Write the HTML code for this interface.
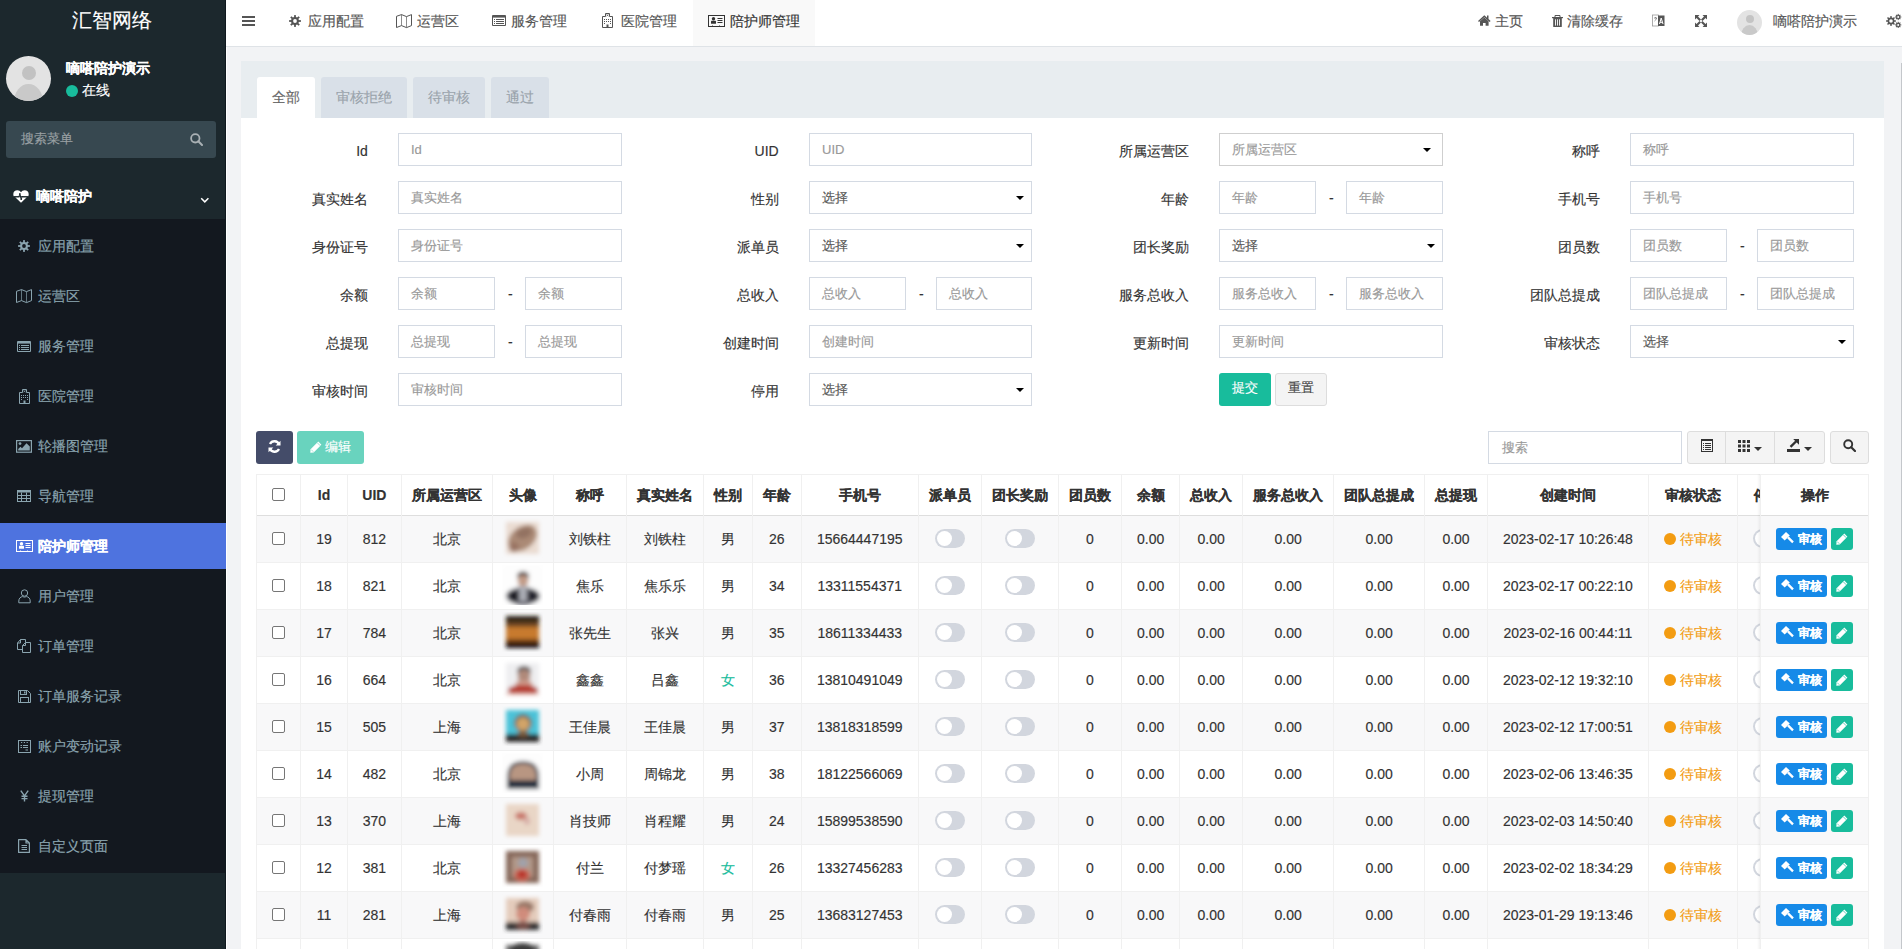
<!DOCTYPE html><html><head><meta charset="utf-8"><title>陪护师管理</title><style>
*{box-sizing:border-box;margin:0;padding:0}
html,body{width:1902px;height:949px;overflow:hidden}
body{position:relative;font-family:"Liberation Sans",sans-serif;font-size:14px;color:#333;background:#f2f3f5;-webkit-text-stroke:0.15px currentColor}
.abs{position:absolute}
#sb{left:0;top:0;width:226px;height:949px;background:#1c282d}
#sbmenu{left:0;top:219px;width:226px;height:654px;background:#13181f}
#sbedge{left:225px;top:0;width:1px;height:949px;background:#10151b}
.mi{position:absolute;left:0;width:225px;height:46px;color:#8aa4af;font-size:14px;line-height:46px}
.mi .ic{position:absolute;left:14px;top:0;width:20px;height:46px;display:flex;align-items:center;justify-content:center}
.mi .tx{position:absolute;left:38px;top:0}
.mi.act{background:#4e73df;color:#fff;width:226px}.mi.act .tx{font-weight:bold}
#hd{left:226px;top:0;width:1676px;height:46px;background:#fff;border-bottom:0}
#hdline{left:226px;top:46px;width:1676px;height:1px;background:#dfe3e7}
.nv{position:absolute;top:0;height:46px;line-height:42px;color:#555;font-size:14px;white-space:nowrap}
.nv svg{position:absolute}
#panel{left:241px;top:61px;width:1643px;height:900px;background:#fff}
#ph{left:0;top:0;width:1643px;height:57px;background:#e8edf0}
.tab{position:absolute;top:16px;height:41px;background:#d9e0e8;color:#9aa3ab;font-size:14px;line-height:40px;text-align:center;border-radius:3px 3px 0 0}
.tab.act{background:#fff;color:#666}
.lbl{position:absolute;font-size:14px;color:#333;text-align:right;white-space:nowrap;line-height:20px}
.inp{position:absolute;height:33px;border:1px solid #d4dae3;background:#fff;font-size:13px;color:#999;line-height:31px;padding-left:12px;white-space:nowrap;overflow:hidden}
.inp.sel{color:#555}
.caret{position:absolute;right:8px;top:14px;width:0;height:0;border-left:4px solid transparent;border-right:4px solid transparent;border-top:4px solid #000}
.dash{position:absolute;font-size:14px;color:#333;line-height:20px}
.btn{position:absolute;height:32px;border-radius:3px;font-size:13px;line-height:32px;text-align:center;white-space:nowrap}
.tb{position:absolute;left:256px;top:474px;width:1613px;height:480px;overflow:hidden}
.th{position:absolute;top:0;height:41px;font-weight:bold;color:#333;text-align:center;line-height:43px;white-space:nowrap;overflow:hidden}
.td{position:absolute;height:47px;text-align:center;line-height:46px;color:#333;white-space:nowrap;overflow:hidden}
.row{position:absolute;left:0;width:1613px;height:47px}
.cb{display:inline-block;width:13px;height:13px;border:1px solid #767676;border-radius:2px;background:#fff;vertical-align:middle}
.tog{position:absolute;width:30px;height:19px;margin-top:-1px;border-radius:10px;background:#d2d6de}
.tog::after{content:"";position:absolute;left:2px;top:2px;width:15px;height:15px;border-radius:50%;background:#fff}
.av{position:absolute;width:32px;height:32px;filter:blur(1.6px)}
</style></head><body>
<div id="sb" class="abs"></div><div id="sbmenu" class="abs"></div><div class="abs" style="left:225px;top:0;width:1px;height:949px;background:#0f181e"></div>
<div class="abs" style="left:0;top:0;width:223px;text-align:center;color:#fff;font-size:20px;line-height:40px">汇智网络</div>
<div class="abs" style="left:6px;top:56px;width:45px;height:45px;border-radius:50%;background:#e3e3e3;overflow:hidden"><div class="abs" style="left:16px;top:10px;width:14px;height:14px;border-radius:50%;background:#c2c2c2"></div><div class="abs" style="left:8px;top:28px;width:29px;height:18px;border-radius:50% 50% 0 0/100% 100% 0 0;background:#c9c9c9"></div></div>
<div class="abs" style="left:66px;top:58px;color:#fff;font-size:14px;font-weight:bold;line-height:20px">嘀嗒陪护演示</div>
<div class="abs" style="left:66px;top:85px;width:12px;height:12px;border-radius:50%;background:#18bc9c"></div>
<div class="abs" style="left:82px;top:80px;color:#fff;font-size:14px;line-height:20px">在线</div>
<div class="abs" style="left:6px;top:121px;width:210px;height:37px;border-radius:3px;background:#374850"></div>
<div class="abs" style="left:21px;top:129px;color:#9aa0a4;font-size:13px;line-height:20px">搜索菜单</div>
<svg class="abs" style="left:190px;top:133px" width="13" height="13" viewBox="0 0 13 13"><circle cx="5.3" cy="5.3" r="4.2" fill="none" stroke="#a9b0b4" stroke-width="1.8"/><line x1="8.3" y1="8.3" x2="12" y2="12" stroke="#a9b0b4" stroke-width="2" stroke-linecap="round"/></svg>
<svg class="abs" style="left:13px;top:190px" width="16" height="13" viewBox="0 0 16 13"><path d="M0.3 4.2 C0.3 1.6 2 0.2 4.4 0.2 C6 0.2 7.2 1 8 2.2 C8.8 1 10 0.2 11.6 0.2 C14 0.2 15.7 1.6 15.7 4.2 C15.7 5.2 15.5 5.8 15.2 6.2 H0.8 C0.5 5.8 0.3 5.2 0.3 4.2 Z" fill="#fff"/><path d="M2.2 7.3 H13.8 L8 12.8 Z" fill="#fff"/><path d="M1 6.8 H6 L6.9 3.2 L8.2 10 L9.2 6 L9.8 6.8 H15" fill="none" stroke="#1c282d" stroke-width="1"/></svg>
<div class="abs" style="left:36px;top:186px;color:#fff;font-size:14px;font-weight:bold;line-height:20px">嘀嗒陪护</div>
<svg class="abs" style="left:200px;top:197px" width="10" height="7" viewBox="0 0 10 7"><path d="M1.2 1.3 L4.8 4.9 L8.4 1.3" fill="none" stroke="#fff" stroke-width="1.5"/></svg>
<div class="mi" style="top:223px"><span class="ic"><svg width="12" height="12" viewBox="0 0 12 12"><rect x="5.1" y="0.1" width="1.8" height="3" transform="rotate(0 6.0 6.0)" fill="#8aa4af"/><rect x="5.1" y="0.1" width="1.8" height="3" transform="rotate(45 6.0 6.0)" fill="#8aa4af"/><rect x="5.1" y="0.1" width="1.8" height="3" transform="rotate(90 6.0 6.0)" fill="#8aa4af"/><rect x="5.1" y="0.1" width="1.8" height="3" transform="rotate(135 6.0 6.0)" fill="#8aa4af"/><rect x="5.1" y="0.1" width="1.8" height="3" transform="rotate(180 6.0 6.0)" fill="#8aa4af"/><rect x="5.1" y="0.1" width="1.8" height="3" transform="rotate(225 6.0 6.0)" fill="#8aa4af"/><rect x="5.1" y="0.1" width="1.8" height="3" transform="rotate(270 6.0 6.0)" fill="#8aa4af"/><rect x="5.1" y="0.1" width="1.8" height="3" transform="rotate(315 6.0 6.0)" fill="#8aa4af"/><circle cx="6" cy="6" r="3.9" fill="#8aa4af"/><circle cx="6" cy="6" r="1.9" fill="#13181f"/></svg></span><span class="tx">应用配置</span></div>
<div class="mi" style="top:273px"><span class="ic"><svg width="17" height="15" viewBox="0 0 17 15"><path d="M0.5 2.3 L5.5 0.6 L10.5 2.6 L15.5 0.6 V11.6 L10.5 13.6 L5.5 11.6 L0.5 13.5 Z" fill="none" stroke="#8aa4af" stroke-width="1" stroke-linejoin="round"/><path d="M5.5 0.6 V11.6 M10.5 2.6 V13.6" stroke="#8aa4af" stroke-width="0.9" opacity="0.75"/></svg></span><span class="tx">运营区</span></div>
<div class="mi" style="top:323px"><span class="ic"><svg width="14" height="11" viewBox="0 0 14 11"><rect x="0" y="0" width="14" height="11" rx="1" fill="#8aa4af"/><rect x="1" y="2.6" width="12" height="7.4" fill="#13181f"/><path d="M2 4.5 H3 M2 6.5 H3 M2 8.5 H3 M4 4.5 H12 M4 6.5 H12 M4 8.5 H12" stroke="#8aa4af" stroke-width="1"/></svg></span><span class="tx">服务管理</span></div>
<div class="mi" style="top:373px"><span class="ic"><svg width="11" height="15" viewBox="0 0 11 15"><path d="M3.5 3.5 V0.5 H7.5 V3.5" fill="none" stroke="#8aa4af" stroke-width="1"/><path d="M4.6 1.6 L6.4 3 M6.4 1.6 L4.6 3" stroke="#8aa4af" stroke-width="0.8"/><path d="M3.5 3.5 H0.5 V14.5 H10.5 V3.5 H7.5" fill="none" stroke="#8aa4af" stroke-width="1"/><path d="M2 6.5 H3 M4 6.5 H5 M6 6.5 H7 M8 6.5 H9 M2 8.5 H3 M4 8.5 H5 M6 8.5 H7 M8 8.5 H9 M2 10.5 H3 M8 10.5 H9" stroke="#8aa4af" stroke-width="1"/><rect x="4.5" y="11.5" width="2" height="3" fill="#8aa4af"/></svg></span><span class="tx">医院管理</span></div>
<div class="mi" style="top:423px"><span class="ic"><svg width="16" height="13" viewBox="0 0 16 13"><rect x="0.6" y="0.6" width="14.8" height="11.6" fill="none" stroke="#8aa4af" stroke-width="1.2"/><circle cx="4" cy="3.6" r="1.4" fill="#8aa4af"/><path d="M2.2 10.5 V9 L4.5 6.8 L6 8.2 L10.5 3.3 L13.8 6.6 V10.5 Z" fill="#8aa4af"/></svg></span><span class="tx">轮播图管理</span></div>
<div class="mi" style="top:473px"><span class="ic"><svg width="14" height="12" viewBox="0 0 14 12"><rect x="0.5" y="0.5" width="13" height="11" fill="none" stroke="#8aa4af" stroke-width="1"/><rect x="0.5" y="0.5" width="13" height="2" fill="#8aa4af"/><path d="M0.5 5.5 H13.5 M0.5 8.5 H13.5 M4.5 2.5 V11.5 M9.5 2.5 V11.5" stroke="#8aa4af" stroke-width="1"/></svg></span><span class="tx">导航管理</span></div>
<div class="mi act" style="top:523px"><span class="ic"><svg width="17" height="12" viewBox="0 0 17 12"><rect x="0.5" y="0.5" width="16" height="11" fill="none" stroke="#fff" stroke-width="1"/><circle cx="5.5" cy="3.8" r="1.7" fill="#fff"/><rect x="3" y="5.8" width="5" height="3" rx="0.6" fill="#fff"/><path d="M9.5 3.5 H14.5 M9.5 5.5 H14.5 M9.5 7.5 H14.5" stroke="#fff" stroke-width="1"/><path d="M4 10.5 H5 M11 10.5 H12" stroke="#fff" stroke-width="0.8" opacity="0.6"/></svg></span><span class="tx">陪护师管理</span></div>
<div class="mi" style="top:573px"><span class="ic"><svg width="13" height="15" viewBox="0 0 13 15"><circle cx="6.5" cy="4" r="3.2" fill="none" stroke="#8aa4af" stroke-width="1"/><path d="M0.8 13.8 V12 C0.8 9.5 2.5 7.8 4.5 7.6 Q6.5 8.6 8.5 7.6 C10.5 7.8 12.2 9.5 12.2 12 V13.8 Z" fill="none" stroke="#8aa4af" stroke-width="1" stroke-linejoin="round"/></svg></span><span class="tx">用户管理</span></div>
<div class="mi" style="top:623px"><span class="ic"><svg width="15" height="14" viewBox="0 0 15 14"><path d="M0.5 4 L3.5 0.5 H8.5 V3.5 M0.5 4 V10.5 H5.5 M0.5 4 H3.5 V0.5" fill="none" stroke="#8aa4af" stroke-width="1"/><path d="M5.5 6.5 L8.5 3.5 H13.5 V13.5 H5.5 Z M5.5 6.5 H8.5 V3.5" fill="none" stroke="#8aa4af" stroke-width="1"/></svg></span><span class="tx">订单管理</span></div>
<div class="mi" style="top:673px"><span class="ic"><svg width="13" height="13" viewBox="0 0 13 13"><path d="M0.5 0.5 H9.5 L12.5 3.5 V12.5 H0.5 Z" fill="none" stroke="#8aa4af" stroke-width="1"/><rect x="2.5" y="0.5" width="6" height="4" fill="none" stroke="#8aa4af" stroke-width="1"/><rect x="6" y="1.5" width="1.5" height="2" fill="#8aa4af"/><rect x="2.5" y="7.5" width="8" height="5" fill="none" stroke="#8aa4af" stroke-width="1"/></svg></span><span class="tx">订单服务记录</span></div>
<div class="mi" style="top:723px"><span class="ic"><svg width="13" height="13" viewBox="0 0 13 13"><rect x="0.5" y="0.5" width="12" height="12" fill="none" stroke="#8aa4af" stroke-width="1"/><path d="M3 2.5 H4.2 M5.8 2.5 H7 M8.6 2.5 H9.8 M2.5 5.5 H4 M5 5.5 H10 M2.5 7.5 H4 M5 7.5 H10 M7.5 10 H10" stroke="#8aa4af" stroke-width="1"/></svg></span><span class="tx">账户变动记录</span></div>
<div class="mi" style="top:773px"><span class="ic"><svg width="9" height="12" viewBox="0 0 9 12"><path d="M0.8 0.6 L4.5 5.8 L8.2 0.6 M4.5 5.8 V11.6 M1.5 6.3 H7.5 M1.5 8.6 H7.5" fill="none" stroke="#8aa4af" stroke-width="1.4"/></svg></span><span class="tx">提现管理</span></div>
<div class="mi" style="top:823px"><span class="ic"><svg width="12" height="14" viewBox="0 0 12 14"><path d="M0.6 0.6 H8 L11.4 4 V13.4 H0.6 Z M8 0.6 V4 H11.4" fill="none" stroke="#8aa4af" stroke-width="1.2" stroke-linejoin="round"/><path d="M3.5 6.5 H9 M3.5 8.5 H9 M3.5 10.5 H9" stroke="#8aa4af" stroke-width="1"/></svg></span><span class="tx">自定义页面</span></div>
<div id="hd" class="abs"></div><div id="hdline" class="abs"></div>
<svg class="abs" style="left:242px;top:16px" width="13" height="10" viewBox="0 0 13 10"><path d="M0 1 H13 M0 5 H13 M0 9 H13" stroke="#555" stroke-width="2"/></svg>
<div class="abs" style="left:693px;top:0;width:122px;height:46px;background:#f9f9f9"></div>
<div class="abs" style="left:289px;top:15px;line-height:0"><svg width="12" height="12" viewBox="0 0 12 12"><rect x="5.1" y="0.1" width="1.8" height="3" transform="rotate(0 6.0 6.0)" fill="#555"/><rect x="5.1" y="0.1" width="1.8" height="3" transform="rotate(45 6.0 6.0)" fill="#555"/><rect x="5.1" y="0.1" width="1.8" height="3" transform="rotate(90 6.0 6.0)" fill="#555"/><rect x="5.1" y="0.1" width="1.8" height="3" transform="rotate(135 6.0 6.0)" fill="#555"/><rect x="5.1" y="0.1" width="1.8" height="3" transform="rotate(180 6.0 6.0)" fill="#555"/><rect x="5.1" y="0.1" width="1.8" height="3" transform="rotate(225 6.0 6.0)" fill="#555"/><rect x="5.1" y="0.1" width="1.8" height="3" transform="rotate(270 6.0 6.0)" fill="#555"/><rect x="5.1" y="0.1" width="1.8" height="3" transform="rotate(315 6.0 6.0)" fill="#555"/><circle cx="6" cy="6" r="3.9" fill="#555"/><circle cx="6" cy="6" r="1.9" fill="#fff"/></svg></div>
<div class="abs" style="left:308px;top:11px;color:#555;font-size:14px;line-height:20px;white-space:nowrap">应用配置</div>
<div class="abs" style="left:396px;top:14px;line-height:0"><svg width="17" height="15" viewBox="0 0 17 15"><path d="M0.5 2.3 L5.5 0.6 L10.5 2.6 L15.5 0.6 V11.6 L10.5 13.6 L5.5 11.6 L0.5 13.5 Z" fill="none" stroke="#555" stroke-width="1" stroke-linejoin="round"/><path d="M5.5 0.6 V11.6 M10.5 2.6 V13.6" stroke="#555" stroke-width="0.9" opacity="0.75"/></svg></div>
<div class="abs" style="left:417px;top:11px;color:#555;font-size:14px;line-height:20px;white-space:nowrap">运营区</div>
<div class="abs" style="left:492px;top:15px;line-height:0"><svg width="14" height="11" viewBox="0 0 14 11"><rect x="0" y="0" width="14" height="11" rx="1" fill="#555"/><rect x="1" y="2.6" width="12" height="7.4" fill="#fff"/><path d="M2 4.5 H3 M2 6.5 H3 M2 8.5 H3 M4 4.5 H12 M4 6.5 H12 M4 8.5 H12" stroke="#555" stroke-width="1"/></svg></div>
<div class="abs" style="left:511px;top:11px;color:#555;font-size:14px;line-height:20px;white-space:nowrap">服务管理</div>
<div class="abs" style="left:602px;top:13px;line-height:0"><svg width="11" height="15" viewBox="0 0 11 15"><path d="M3.5 3.5 V0.5 H7.5 V3.5" fill="none" stroke="#555" stroke-width="1"/><path d="M4.6 1.6 L6.4 3 M6.4 1.6 L4.6 3" stroke="#555" stroke-width="0.8"/><path d="M3.5 3.5 H0.5 V14.5 H10.5 V3.5 H7.5" fill="none" stroke="#555" stroke-width="1"/><path d="M2 6.5 H3 M4 6.5 H5 M6 6.5 H7 M8 6.5 H9 M2 8.5 H3 M4 8.5 H5 M6 8.5 H7 M8 8.5 H9 M2 10.5 H3 M8 10.5 H9" stroke="#555" stroke-width="1"/><rect x="4.5" y="11.5" width="2" height="3" fill="#555"/></svg></div>
<div class="abs" style="left:621px;top:11px;color:#555;font-size:14px;line-height:20px;white-space:nowrap">医院管理</div>
<div class="abs" style="left:708px;top:15px;line-height:0"><svg width="17" height="12" viewBox="0 0 17 12"><rect x="0.5" y="0.5" width="16" height="11" fill="none" stroke="#333" stroke-width="1"/><circle cx="5.5" cy="3.8" r="1.7" fill="#333"/><rect x="3" y="5.8" width="5" height="3" rx="0.6" fill="#333"/><path d="M9.5 3.5 H14.5 M9.5 5.5 H14.5 M9.5 7.5 H14.5" stroke="#333" stroke-width="1"/><path d="M4 10.5 H5 M11 10.5 H12" stroke="#333" stroke-width="0.8" opacity="0.6"/></svg></div>
<div class="abs" style="left:730px;top:11px;color:#333;font-size:14px;line-height:20px;white-space:nowrap">陪护师管理</div>
<div class="abs" style="left:1478px;top:15px;line-height:0"><svg width="13" height="11" viewBox="0 0 13 11"><path d="M6.3 0.3 L0 6 L1 7 L6.3 2.2 L11.6 7 L12.6 6 L10.5 4.1 V0.5 H9 V2.7 Z" fill="#555"/><path d="M2 6.3 L6.3 2.6 L10.6 6.3 V10.8 H7.6 V8 H5 V10.8 H2 Z" fill="#555"/></svg></div>
<div class="abs" style="left:1495px;top:11px;color:#555;font-size:14px;line-height:20px;white-space:nowrap">主页</div>
<div class="abs" style="left:1552px;top:15px;line-height:0"><svg width="11" height="12" viewBox="0 0 11 12"><path d="M3 2.5 V0.5 H8 V2.5" fill="none" stroke="#555" stroke-width="1"/><rect x="0" y="2" width="11" height="1.2" fill="#555"/><path d="M1.2 3 H9.8 V11.4 Q9.8 12 9.2 12 H1.8 Q1.2 12 1.2 11.4 Z" fill="#555"/><path d="M3.5 4.3 V10.6 M5.5 4.3 V10.6 M7.5 4.3 V10.6" stroke="#fff" stroke-width="0.9"/></svg></div>
<div class="abs" style="left:1567px;top:11px;color:#555;font-size:14px;line-height:20px;white-space:nowrap">清除缓存</div>
<div class="abs" style="left:1652px;top:14px;line-height:0"><svg width="13" height="14" viewBox="0 0 13 14"><rect x="0.5" y="1" width="6" height="11" fill="#fff" stroke="#999" stroke-width="0.8"/><rect x="6" y="1.5" width="6.5" height="10.5" fill="#555"/><path d="M7.5 10 L9.2 4 L11 10 M8 8.3 H10.5" stroke="#fff" stroke-width="1" fill="none"/><path d="M2 4 H5 M3.5 3 V4 M2.5 7 Q4 6 4.8 4" stroke="#777" stroke-width="0.8" fill="none"/></svg></div>
<div class="abs" style="left:1695px;top:15px;line-height:0"><svg width="12" height="12" viewBox="0 0 12 12"><path d="M0 0 H4.5 L3 1.5 L6 4.5 L4.5 6 L1.5 3 L0 4.5 Z M12 0 V4.5 L10.5 3 L7.5 6 L6 4.5 L9 1.5 L7.5 0 Z M0 12 V7.5 L1.5 9 L4.5 6 L6 7.5 L3 10.5 L4.5 12 Z M12 12 H7.5 L9 10.5 L6 7.5 L7.5 6 L10.5 9 L12 7.5 Z" fill="#555"/></svg></div>
<div class="abs" style="left:1737px;top:10px;width:25px;height:25px;border-radius:50%;background:#e3e3e3;overflow:hidden"><div class="abs" style="left:9px;top:5px;width:8px;height:8px;border-radius:50%;background:#c4c4c4"></div><div class="abs" style="left:4px;top:15px;width:17px;height:11px;border-radius:50% 50% 0 0/100% 100% 0 0;background:#c9c9c9"></div></div>
<div class="abs" style="left:1773px;top:11px;color:#555;font-size:14px;line-height:20px">嘀嗒陪护演示</div>
<div class="abs" style="left:1886px;top:13px;line-height:0"><svg width="18" height="18" viewBox="0 0 18 18"><rect x="4.25" y="3.10" width="1.5" height="2.30" transform="rotate(0.0 5 8)" fill="#555"/><rect x="4.25" y="3.10" width="1.5" height="2.30" transform="rotate(45.0 5 8)" fill="#555"/><rect x="4.25" y="3.10" width="1.5" height="2.30" transform="rotate(90.0 5 8)" fill="#555"/><rect x="4.25" y="3.10" width="1.5" height="2.30" transform="rotate(135.0 5 8)" fill="#555"/><rect x="4.25" y="3.10" width="1.5" height="2.30" transform="rotate(180.0 5 8)" fill="#555"/><rect x="4.25" y="3.10" width="1.5" height="2.30" transform="rotate(225.0 5 8)" fill="#555"/><rect x="4.25" y="3.10" width="1.5" height="2.30" transform="rotate(270.0 5 8)" fill="#555"/><rect x="4.25" y="3.10" width="1.5" height="2.30" transform="rotate(315.0 5 8)" fill="#555"/><circle cx="5" cy="8" r="3.4" fill="#555"/><circle cx="5" cy="8" r="1.8" fill="#fff"/><rect x="11.65" y="0.90" width="1.1" height="1.80" transform="rotate(0.0 12.2 4)" fill="#555"/><rect x="11.65" y="0.90" width="1.1" height="1.80" transform="rotate(45.0 12.2 4)" fill="#555"/><rect x="11.65" y="0.90" width="1.1" height="1.80" transform="rotate(90.0 12.2 4)" fill="#555"/><rect x="11.65" y="0.90" width="1.1" height="1.80" transform="rotate(135.0 12.2 4)" fill="#555"/><rect x="11.65" y="0.90" width="1.1" height="1.80" transform="rotate(180.0 12.2 4)" fill="#555"/><rect x="11.65" y="0.90" width="1.1" height="1.80" transform="rotate(225.0 12.2 4)" fill="#555"/><rect x="11.65" y="0.90" width="1.1" height="1.80" transform="rotate(270.0 12.2 4)" fill="#555"/><rect x="11.65" y="0.90" width="1.1" height="1.80" transform="rotate(315.0 12.2 4)" fill="#555"/><circle cx="12.2" cy="4" r="2.1" fill="#555"/><circle cx="12.2" cy="4" r="1.0" fill="#fff"/><rect x="11.65" y="8.80" width="1.1" height="1.80" transform="rotate(0.0 12.2 11.9)" fill="#555"/><rect x="11.65" y="8.80" width="1.1" height="1.80" transform="rotate(45.0 12.2 11.9)" fill="#555"/><rect x="11.65" y="8.80" width="1.1" height="1.80" transform="rotate(90.0 12.2 11.9)" fill="#555"/><rect x="11.65" y="8.80" width="1.1" height="1.80" transform="rotate(135.0 12.2 11.9)" fill="#555"/><rect x="11.65" y="8.80" width="1.1" height="1.80" transform="rotate(180.0 12.2 11.9)" fill="#555"/><rect x="11.65" y="8.80" width="1.1" height="1.80" transform="rotate(225.0 12.2 11.9)" fill="#555"/><rect x="11.65" y="8.80" width="1.1" height="1.80" transform="rotate(270.0 12.2 11.9)" fill="#555"/><rect x="11.65" y="8.80" width="1.1" height="1.80" transform="rotate(315.0 12.2 11.9)" fill="#555"/><circle cx="12.2" cy="11.9" r="2.1" fill="#555"/><circle cx="12.2" cy="11.9" r="1.0" fill="#fff"/></svg></div>
<div class="abs" style="left:226px;top:47px;width:1px;height:902px;background:#fff"></div>
<div class="abs" style="left:1901px;top:63px;width:1px;height:886px;background:#c4c7cb"></div>
<div id="panel" class="abs"><div id="ph" class="abs"></div>
<div class="tab act" style="left:16px;width:58px">全部</div>
<div class="tab" style="left:80px;width:86px">审核拒绝</div>
<div class="tab" style="left:172px;width:72px">待审核</div>
<div class="tab" style="left:250px;width:58px">通过</div>
</div>
<div class="lbl" style="right:1534.10px;top:141px">Id</div>
<div class="inp" style="left:398px;top:133px;width:224px;">Id</div>
<div class="lbl" style="right:1123.35px;top:141px">UID</div>
<div class="inp" style="left:809px;top:133px;width:223px;">UID</div>
<div class="lbl" style="right:712.60px;top:141px">所属运营区</div>
<div class="inp" style="left:1219px;top:133px;width:224px;border-color:#cfcfcf;">所属运营区<span class="caret" style="right:11px"></span></div>
<div class="lbl" style="right:301.85px;top:141px">称呼</div>
<div class="inp" style="left:1630px;top:133px;width:224px;">称呼</div>
<div class="lbl" style="right:1534.10px;top:189px">真实姓名</div>
<div class="inp" style="left:398px;top:181px;width:224px;">真实姓名</div>
<div class="lbl" style="right:1123.35px;top:189px">性别</div>
<div class="inp sel" style="left:809px;top:181px;width:223px;">选择<span class="caret" style="right:7px"></span></div>
<div class="lbl" style="right:712.60px;top:189px">年龄</div>
<div class="inp" style="left:1219px;top:181px;width:97px">年龄</div>
<div class="dash" style="left:1329px;top:188px">-</div>
<div class="inp" style="left:1346px;top:181px;width:97px">年龄</div>
<div class="lbl" style="right:301.85px;top:189px">手机号</div>
<div class="inp" style="left:1630px;top:181px;width:224px;">手机号</div>
<div class="lbl" style="right:1534.10px;top:237px">身份证号</div>
<div class="inp" style="left:398px;top:229px;width:224px;">身份证号</div>
<div class="lbl" style="right:1123.35px;top:237px">派单员</div>
<div class="inp sel" style="left:809px;top:229px;width:223px;">选择<span class="caret" style="right:7px"></span></div>
<div class="lbl" style="right:712.60px;top:237px">团长奖励</div>
<div class="inp sel" style="left:1219px;top:229px;width:224px;">选择<span class="caret" style="right:7px"></span></div>
<div class="lbl" style="right:301.85px;top:237px">团员数</div>
<div class="inp" style="left:1630px;top:229px;width:97px">团员数</div>
<div class="dash" style="left:1740px;top:236px">-</div>
<div class="inp" style="left:1757px;top:229px;width:97px">团员数</div>
<div class="lbl" style="right:1534.10px;top:285px">余额</div>
<div class="inp" style="left:398px;top:277px;width:97px">余额</div>
<div class="dash" style="left:508px;top:284px">-</div>
<div class="inp" style="left:525px;top:277px;width:97px">余额</div>
<div class="lbl" style="right:1123.35px;top:285px">总收入</div>
<div class="inp" style="left:809px;top:277px;width:97px">总收入</div>
<div class="dash" style="left:919px;top:284px">-</div>
<div class="inp" style="left:936px;top:277px;width:96px">总收入</div>
<div class="lbl" style="right:712.60px;top:285px">服务总收入</div>
<div class="inp" style="left:1219px;top:277px;width:97px">服务总收入</div>
<div class="dash" style="left:1329px;top:284px">-</div>
<div class="inp" style="left:1346px;top:277px;width:97px">服务总收入</div>
<div class="lbl" style="right:301.85px;top:285px">团队总提成</div>
<div class="inp" style="left:1630px;top:277px;width:97px">团队总提成</div>
<div class="dash" style="left:1740px;top:284px">-</div>
<div class="inp" style="left:1757px;top:277px;width:97px">团队总提成</div>
<div class="lbl" style="right:1534.10px;top:333px">总提现</div>
<div class="inp" style="left:398px;top:325px;width:97px">总提现</div>
<div class="dash" style="left:508px;top:332px">-</div>
<div class="inp" style="left:525px;top:325px;width:97px">总提现</div>
<div class="lbl" style="right:1123.35px;top:333px">创建时间</div>
<div class="inp" style="left:809px;top:325px;width:223px;">创建时间</div>
<div class="lbl" style="right:712.60px;top:333px">更新时间</div>
<div class="inp" style="left:1219px;top:325px;width:224px;">更新时间</div>
<div class="lbl" style="right:301.85px;top:333px">审核状态</div>
<div class="inp sel" style="left:1630px;top:325px;width:224px;">选择<span class="caret" style="right:7px"></span></div>
<div class="lbl" style="right:1534.10px;top:381px">审核时间</div>
<div class="inp" style="left:398px;top:373px;width:224px;">审核时间</div>
<div class="lbl" style="right:1123.35px;top:381px">停用</div>
<div class="inp sel" style="left:809px;top:373px;width:223px;">选择<span class="caret" style="right:7px"></span></div>
<div class="btn" style="left:1219px;top:373px;width:52px;height:33px;background:#18bc9c;color:#fff;line-height:30px">提交</div>
<div class="btn" style="left:1275px;top:373px;width:52px;height:33px;background:#f4f4f4;border:1px solid #ddd;color:#444;line-height:28px">重置</div>
<div class="btn" style="left:256px;top:431px;width:37px;height:33px;background:#444c69"><span class="abs" style="left:12px;top:9px;line-height:0"><svg width="13" height="13" viewBox="0 0 13 13"><path d="M11.2 4.6 A5 5 0 0 0 2 4" fill="none" stroke="#fff" stroke-width="2.3"/><path d="M12.5 0.8 V5.6 H7.7 Z" fill="#fff"/><path d="M1.8 8.4 A5 5 0 0 0 11 9" fill="none" stroke="#fff" stroke-width="2.3"/><path d="M0.5 12.2 V7.4 H5.3 Z" fill="#fff"/></svg></span></div>
<div class="btn" style="left:297px;top:431px;width:67px;height:33px;background:#69d3be;color:#fff"><span class="abs" style="left:13px;top:10px;line-height:0"><svg width="12" height="12" viewBox="0 0 12 12"><path d="M0.3 11.7 L0.6 8.3 L8.3 0.6 L11.4 3.7 L3.7 11.4 Z" fill="#fff"/><path d="M7.2 1.7 L10.3 4.8" stroke="#69d3be" stroke-width="0.7"/><path d="M1.2 8.6 L3.4 10.8" stroke="#69d3be" stroke-width="0.6"/></svg></span><span class="abs" style="left:28px;top:0">编辑</span></div>
<div class="inp" style="left:1488px;top:431px;width:194px;height:33px;line-height:31px;padding-left:13px">搜索</div>
<div class="abs" style="left:1687px;top:431px;width:138px;height:33px;border:1px solid #ddd;border-radius:3px;background:#f4f4f4"></div>
<div class="abs" style="left:1725px;top:432px;width:1px;height:31px;background:#ddd"></div>
<div class="abs" style="left:1774px;top:432px;width:1px;height:31px;background:#ddd"></div>
<div class="abs" style="left:1830px;top:431px;width:39px;height:33px;border:1px solid #ddd;border-radius:3px;background:#f4f4f4"></div>
<div class="abs" style="left:1701px;top:439px;line-height:0"><svg width="12" height="13" viewBox="0 0 12 13"><rect x="0.5" y="0.5" width="11" height="12" fill="none" stroke="#333" stroke-width="1"/><rect x="0.5" y="0.5" width="11" height="1.5" fill="#333"/><path d="M2 4.5 H3 M4 4.5 H10 M2 6.5 H3 M4 6.5 H10 M2 8.5 H3 M4 8.5 H10 M2 10.5 H3 M4 10.5 H10" stroke="#333" stroke-width="1"/></svg></div>
<div class="abs" style="left:1738px;top:440px;line-height:0"><svg width="12" height="12" viewBox="0 0 12 12"><g fill="#333"><rect x="0" y="0" width="3" height="3"/><rect x="4.5" y="0" width="3" height="3"/><rect x="9" y="0" width="3" height="3"/><rect x="0" y="4.5" width="3" height="3"/><rect x="4.5" y="4.5" width="3" height="3"/><rect x="9" y="4.5" width="3" height="3"/><rect x="0" y="9" width="3" height="3"/><rect x="4.5" y="9" width="3" height="3"/><rect x="9" y="9" width="3" height="3"/></g></svg></div><div class="abs" style="left:1754px;top:446px;line-height:0"><span style="display:inline-block;width:0;height:0;border-left:4px solid transparent;border-right:4px solid transparent;border-top:4px solid #333"></span></div>
<div class="abs" style="left:1787px;top:439px;line-height:0"><svg width="13" height="13" viewBox="0 0 13 13"><rect x="0" y="10" width="13" height="3" fill="#333"/><path d="M3.5 7.8 L9.5 2" stroke="#333" stroke-width="2.4"/><path d="M6.2 0 H12 V5.8 Z" fill="#333"/></svg></div><div class="abs" style="left:1804px;top:446px;line-height:0"><span style="display:inline-block;width:0;height:0;border-left:4px solid transparent;border-right:4px solid transparent;border-top:4px solid #333"></span></div>
<div class="abs" style="left:1843px;top:439px;line-height:0"><svg width="13" height="13" viewBox="0 0 13 13"><circle cx="5.2" cy="5.2" r="4" fill="none" stroke="#333" stroke-width="1.9"/><line x1="8.2" y1="8.2" x2="12" y2="12" stroke="#333" stroke-width="2.2" stroke-linecap="round"/></svg></div>
<div class="tb">
<div class="th" style="left:0.00px;width:44.60px"><span class="cb" style="margin-top:-3px"></span></div>
<div class="th" style="left:44.60px;width:46.80px">Id</div>
<div class="th" style="left:91.40px;width:54.00px">UID</div>
<div class="th" style="left:145.40px;width:90.90px">所属运营区</div>
<div class="th" style="left:236.30px;width:61.20px">头像</div>
<div class="th" style="left:297.50px;width:72.80px">称呼</div>
<div class="th" style="left:370.30px;width:77.20px">真实姓名</div>
<div class="th" style="left:447.50px;width:48.90px">性别</div>
<div class="th" style="left:496.40px;width:48.90px">年龄</div>
<div class="th" style="left:545.30px;width:116.90px">手机号</div>
<div class="th" style="left:662.20px;width:63.20px">派单员</div>
<div class="th" style="left:725.40px;width:77.00px">团长奖励</div>
<div class="th" style="left:802.40px;width:63.20px">团员数</div>
<div class="th" style="left:865.60px;width:58.00px">余额</div>
<div class="th" style="left:923.60px;width:63.20px">总收入</div>
<div class="th" style="left:986.80px;width:90.80px">服务总收入</div>
<div class="th" style="left:1077.60px;width:91.00px">团队总提成</div>
<div class="th" style="left:1168.60px;width:62.90px">总提现</div>
<div class="th" style="left:1231.50px;width:160.80px">创建时间</div>
<div class="th" style="left:1392.30px;width:89.00px">审核状态</div>
<div class="th" style="left:1481.30px;width:60.70px">停用</div>
<div class="abs" style="left:0;top:0;width:1613px;height:1px;background:#f0f0f0"></div>
<div class="abs" style="left:0;top:41px;width:1613px;height:1px;background:#dedede"></div>
<div class="row" style="top:42px;background:#f8f8f9">
<div class="td" style="left:0.00px;width:44.60px"><span class="cb" style="margin-top:-4px"></span></div>
<div class="td" style="left:44.60px;width:46.80px">19</div>
<div class="td" style="left:91.40px;width:54.00px">812</div>
<div class="td" style="left:145.40px;width:90.90px">北京</div>
<div class="td" style="left:236.30px;width:61.20px"><svg class="abs" style="left:10.1px;top:2px" width="41" height="40" viewBox="-4 -4 41 40"><defs><filter id="bl0" x="-30%" y="-30%" width="160%" height="160%"><feGaussianBlur stdDeviation="2.2"/></filter></defs><g filter="url(#bl0)"><rect x="0" y="0" width="33" height="32" fill="#eadcd2"/><ellipse cx="16.5" cy="16" rx="16" ry="11" transform="rotate(-38 16.5 16)" fill="#ab8a76"/><ellipse cx="18" cy="11" rx="8" ry="5" transform="rotate(-20 18 11)" fill="#937262"/><circle cx="8" cy="25" r="5" fill="#9a7464"/></g></svg></div>
<div class="td" style="left:297.50px;width:72.80px">刘铁柱</div>
<div class="td" style="left:370.30px;width:77.20px">刘铁柱</div>
<div class="td" style="left:447.50px;width:48.90px">男</div>
<div class="td" style="left:496.40px;width:48.90px">26</div>
<div class="td" style="left:545.30px;width:116.90px">15664447195</div>
<div class="td" style="left:662.20px;width:63.20px"><div class="tog" style="left:16.6px;top:14px"></div></div>
<div class="td" style="left:725.40px;width:77.00px"><div class="tog" style="left:23.5px;top:14px"></div></div>
<div class="td" style="left:802.40px;width:63.20px">0</div>
<div class="td" style="left:865.60px;width:58.00px">0.00</div>
<div class="td" style="left:923.60px;width:63.20px">0.00</div>
<div class="td" style="left:986.80px;width:90.80px">0.00</div>
<div class="td" style="left:1077.60px;width:91.00px">0.00</div>
<div class="td" style="left:1168.60px;width:62.90px">0.00</div>
<div class="td" style="left:1231.50px;width:160.80px">2023-02-17 10:26:48</div>
<div class="td" style="left:1392.30px;width:89.00px"><span style="color:#f39c12"><span style="display:inline-block;width:12px;height:12px;border-radius:50%;background:#f39c12;vertical-align:-1px;margin-right:4px"></span>待审核</span></div>
<div class="td" style="left:1481.30px;width:60.70px"><div class="tog" style="left:15.4px;top:14px"></div></div>
<div class="abs" style="left:0;top:46px;width:1613px;height:1px;background:#f0f0f0"></div>
</div>
<div class="row" style="top:89px;background:#fff">
<div class="td" style="left:0.00px;width:44.60px"><span class="cb" style="margin-top:-4px"></span></div>
<div class="td" style="left:44.60px;width:46.80px">18</div>
<div class="td" style="left:91.40px;width:54.00px">821</div>
<div class="td" style="left:145.40px;width:90.90px">北京</div>
<div class="td" style="left:236.30px;width:61.20px"><svg class="abs" style="left:10.1px;top:2px" width="41" height="40" viewBox="-4 -4 41 40"><defs><filter id="bl1" x="-30%" y="-30%" width="160%" height="160%"><feGaussianBlur stdDeviation="2.2"/></filter></defs><g filter="url(#bl1)"><rect x="-4" y="-4" width="41" height="40" fill="#fdfdfd"/><ellipse cx="17" cy="7" rx="6" ry="4.5" fill="#4a3e3c"/><ellipse cx="17" cy="12" rx="5.5" ry="6" fill="#c29c88"/><ellipse cx="17" cy="27" rx="17" ry="9" fill="#5c5c66"/><rect x="13.5" y="17" width="7" height="15" fill="#aeb0b8"/><circle cx="8" cy="27" r="5" fill="#1c1c24"/><circle cx="26.5" cy="27" r="5" fill="#24242c"/></g></svg></div>
<div class="td" style="left:297.50px;width:72.80px">焦乐</div>
<div class="td" style="left:370.30px;width:77.20px">焦乐乐</div>
<div class="td" style="left:447.50px;width:48.90px">男</div>
<div class="td" style="left:496.40px;width:48.90px">34</div>
<div class="td" style="left:545.30px;width:116.90px">13311554371</div>
<div class="td" style="left:662.20px;width:63.20px"><div class="tog" style="left:16.6px;top:14px"></div></div>
<div class="td" style="left:725.40px;width:77.00px"><div class="tog" style="left:23.5px;top:14px"></div></div>
<div class="td" style="left:802.40px;width:63.20px">0</div>
<div class="td" style="left:865.60px;width:58.00px">0.00</div>
<div class="td" style="left:923.60px;width:63.20px">0.00</div>
<div class="td" style="left:986.80px;width:90.80px">0.00</div>
<div class="td" style="left:1077.60px;width:91.00px">0.00</div>
<div class="td" style="left:1168.60px;width:62.90px">0.00</div>
<div class="td" style="left:1231.50px;width:160.80px">2023-02-17 00:22:10</div>
<div class="td" style="left:1392.30px;width:89.00px"><span style="color:#f39c12"><span style="display:inline-block;width:12px;height:12px;border-radius:50%;background:#f39c12;vertical-align:-1px;margin-right:4px"></span>待审核</span></div>
<div class="td" style="left:1481.30px;width:60.70px"><div class="tog" style="left:15.4px;top:14px"></div></div>
<div class="abs" style="left:0;top:46px;width:1613px;height:1px;background:#f0f0f0"></div>
</div>
<div class="row" style="top:136px;background:#f8f8f9">
<div class="td" style="left:0.00px;width:44.60px"><span class="cb" style="margin-top:-4px"></span></div>
<div class="td" style="left:44.60px;width:46.80px">17</div>
<div class="td" style="left:91.40px;width:54.00px">784</div>
<div class="td" style="left:145.40px;width:90.90px">北京</div>
<div class="td" style="left:236.30px;width:61.20px"><svg class="abs" style="left:10.1px;top:2px" width="41" height="40" viewBox="-4 -4 41 40"><defs><filter id="bl2" x="-30%" y="-30%" width="160%" height="160%"><feGaussianBlur stdDeviation="2.2"/></filter></defs><g filter="url(#bl2)"><rect x="0" y="0" width="33" height="6" fill="#2a2018"/><rect x="0" y="6" width="33" height="5" fill="#6a4422"/><rect x="0" y="11" width="33" height="12" fill="#c77a2e"/><rect x="0" y="23" width="33" height="4" fill="#6a3a18"/><rect x="0" y="27" width="33" height="5" fill="#140e0c"/></g></svg></div>
<div class="td" style="left:297.50px;width:72.80px">张先生</div>
<div class="td" style="left:370.30px;width:77.20px">张兴</div>
<div class="td" style="left:447.50px;width:48.90px">男</div>
<div class="td" style="left:496.40px;width:48.90px">35</div>
<div class="td" style="left:545.30px;width:116.90px">18611334433</div>
<div class="td" style="left:662.20px;width:63.20px"><div class="tog" style="left:16.6px;top:14px"></div></div>
<div class="td" style="left:725.40px;width:77.00px"><div class="tog" style="left:23.5px;top:14px"></div></div>
<div class="td" style="left:802.40px;width:63.20px">0</div>
<div class="td" style="left:865.60px;width:58.00px">0.00</div>
<div class="td" style="left:923.60px;width:63.20px">0.00</div>
<div class="td" style="left:986.80px;width:90.80px">0.00</div>
<div class="td" style="left:1077.60px;width:91.00px">0.00</div>
<div class="td" style="left:1168.60px;width:62.90px">0.00</div>
<div class="td" style="left:1231.50px;width:160.80px">2023-02-16 00:44:11</div>
<div class="td" style="left:1392.30px;width:89.00px"><span style="color:#f39c12"><span style="display:inline-block;width:12px;height:12px;border-radius:50%;background:#f39c12;vertical-align:-1px;margin-right:4px"></span>待审核</span></div>
<div class="td" style="left:1481.30px;width:60.70px"><div class="tog" style="left:15.4px;top:14px"></div></div>
<div class="abs" style="left:0;top:46px;width:1613px;height:1px;background:#f0f0f0"></div>
</div>
<div class="row" style="top:183px;background:#fff">
<div class="td" style="left:0.00px;width:44.60px"><span class="cb" style="margin-top:-4px"></span></div>
<div class="td" style="left:44.60px;width:46.80px">16</div>
<div class="td" style="left:91.40px;width:54.00px">664</div>
<div class="td" style="left:145.40px;width:90.90px">北京</div>
<div class="td" style="left:236.30px;width:61.20px"><svg class="abs" style="left:10.1px;top:2px" width="41" height="40" viewBox="-4 -4 41 40"><defs><filter id="bl3" x="-30%" y="-30%" width="160%" height="160%"><feGaussianBlur stdDeviation="2.2"/></filter></defs><g filter="url(#bl3)"><rect x="0" y="0" width="33" height="32" fill="#eeeef0"/><ellipse cx="18" cy="8" rx="7" ry="5" fill="#5e5858"/><ellipse cx="18" cy="13.5" rx="6.5" ry="7" fill="#b08a7a"/><ellipse cx="18" cy="21" rx="9" ry="3.5" fill="#d09a8a"/><ellipse cx="17" cy="27" rx="15" ry="5" fill="#b63a2e"/><rect x="0" y="30" width="33" height="2" fill="#e2b4aa"/></g></svg></div>
<div class="td" style="left:297.50px;width:72.80px">鑫鑫</div>
<div class="td" style="left:370.30px;width:77.20px">吕鑫</div>
<div class="td" style="left:447.50px;width:48.90px"><span style="color:#18bc9c">女</span></div>
<div class="td" style="left:496.40px;width:48.90px">36</div>
<div class="td" style="left:545.30px;width:116.90px">13810491049</div>
<div class="td" style="left:662.20px;width:63.20px"><div class="tog" style="left:16.6px;top:14px"></div></div>
<div class="td" style="left:725.40px;width:77.00px"><div class="tog" style="left:23.5px;top:14px"></div></div>
<div class="td" style="left:802.40px;width:63.20px">0</div>
<div class="td" style="left:865.60px;width:58.00px">0.00</div>
<div class="td" style="left:923.60px;width:63.20px">0.00</div>
<div class="td" style="left:986.80px;width:90.80px">0.00</div>
<div class="td" style="left:1077.60px;width:91.00px">0.00</div>
<div class="td" style="left:1168.60px;width:62.90px">0.00</div>
<div class="td" style="left:1231.50px;width:160.80px">2023-02-12 19:32:10</div>
<div class="td" style="left:1392.30px;width:89.00px"><span style="color:#f39c12"><span style="display:inline-block;width:12px;height:12px;border-radius:50%;background:#f39c12;vertical-align:-1px;margin-right:4px"></span>待审核</span></div>
<div class="td" style="left:1481.30px;width:60.70px"><div class="tog" style="left:15.4px;top:14px"></div></div>
<div class="abs" style="left:0;top:46px;width:1613px;height:1px;background:#f0f0f0"></div>
</div>
<div class="row" style="top:230px;background:#f8f8f9">
<div class="td" style="left:0.00px;width:44.60px"><span class="cb" style="margin-top:-4px"></span></div>
<div class="td" style="left:44.60px;width:46.80px">15</div>
<div class="td" style="left:91.40px;width:54.00px">505</div>
<div class="td" style="left:145.40px;width:90.90px">上海</div>
<div class="td" style="left:236.30px;width:61.20px"><svg class="abs" style="left:10.1px;top:2px" width="41" height="40" viewBox="-4 -4 41 40"><defs><filter id="bl4" x="-30%" y="-30%" width="160%" height="160%"><feGaussianBlur stdDeviation="2.2"/></filter></defs><g filter="url(#bl4)"><rect x="0" y="0" width="33" height="32" fill="#4cc2d8"/><circle cx="17" cy="13" r="9" fill="#6e6a5c"/><circle cx="17" cy="14" r="6.5" fill="#d2a468"/><rect x="0" y="24" width="33" height="8" fill="#2c2a2a"/><ellipse cx="17" cy="24" rx="6" ry="3" fill="#7a5a3a"/></g></svg></div>
<div class="td" style="left:297.50px;width:72.80px">王佳晨</div>
<div class="td" style="left:370.30px;width:77.20px">王佳晨</div>
<div class="td" style="left:447.50px;width:48.90px">男</div>
<div class="td" style="left:496.40px;width:48.90px">37</div>
<div class="td" style="left:545.30px;width:116.90px">13818318599</div>
<div class="td" style="left:662.20px;width:63.20px"><div class="tog" style="left:16.6px;top:14px"></div></div>
<div class="td" style="left:725.40px;width:77.00px"><div class="tog" style="left:23.5px;top:14px"></div></div>
<div class="td" style="left:802.40px;width:63.20px">0</div>
<div class="td" style="left:865.60px;width:58.00px">0.00</div>
<div class="td" style="left:923.60px;width:63.20px">0.00</div>
<div class="td" style="left:986.80px;width:90.80px">0.00</div>
<div class="td" style="left:1077.60px;width:91.00px">0.00</div>
<div class="td" style="left:1168.60px;width:62.90px">0.00</div>
<div class="td" style="left:1231.50px;width:160.80px">2023-02-12 17:00:51</div>
<div class="td" style="left:1392.30px;width:89.00px"><span style="color:#f39c12"><span style="display:inline-block;width:12px;height:12px;border-radius:50%;background:#f39c12;vertical-align:-1px;margin-right:4px"></span>待审核</span></div>
<div class="td" style="left:1481.30px;width:60.70px"><div class="tog" style="left:15.4px;top:14px"></div></div>
<div class="abs" style="left:0;top:46px;width:1613px;height:1px;background:#f0f0f0"></div>
</div>
<div class="row" style="top:277px;background:#fff">
<div class="td" style="left:0.00px;width:44.60px"><span class="cb" style="margin-top:-4px"></span></div>
<div class="td" style="left:44.60px;width:46.80px">14</div>
<div class="td" style="left:91.40px;width:54.00px">482</div>
<div class="td" style="left:145.40px;width:90.90px">北京</div>
<div class="td" style="left:236.30px;width:61.20px"><svg class="abs" style="left:10.1px;top:2px" width="41" height="40" viewBox="-4 -4 41 40"><defs><filter id="bl5" x="-30%" y="-30%" width="160%" height="160%"><feGaussianBlur stdDeviation="2.2"/></filter></defs><g filter="url(#bl5)"><rect x="-4" y="-4" width="41" height="40" fill="#fdfdfd"/><path d="M1 32 V20 Q1 4 17 4 Q33 4 33 20 V32 Z" fill="#4a4a52"/><path d="M4 24 V19 Q4 7 17 7 Q30 7 30 19 V24 Z" fill="#b89682"/><rect x="1" y="23" width="32" height="9" fill="#263040"/></g></svg></div>
<div class="td" style="left:297.50px;width:72.80px">小周</div>
<div class="td" style="left:370.30px;width:77.20px">周锦龙</div>
<div class="td" style="left:447.50px;width:48.90px">男</div>
<div class="td" style="left:496.40px;width:48.90px">38</div>
<div class="td" style="left:545.30px;width:116.90px">18122566069</div>
<div class="td" style="left:662.20px;width:63.20px"><div class="tog" style="left:16.6px;top:14px"></div></div>
<div class="td" style="left:725.40px;width:77.00px"><div class="tog" style="left:23.5px;top:14px"></div></div>
<div class="td" style="left:802.40px;width:63.20px">0</div>
<div class="td" style="left:865.60px;width:58.00px">0.00</div>
<div class="td" style="left:923.60px;width:63.20px">0.00</div>
<div class="td" style="left:986.80px;width:90.80px">0.00</div>
<div class="td" style="left:1077.60px;width:91.00px">0.00</div>
<div class="td" style="left:1168.60px;width:62.90px">0.00</div>
<div class="td" style="left:1231.50px;width:160.80px">2023-02-06 13:46:35</div>
<div class="td" style="left:1392.30px;width:89.00px"><span style="color:#f39c12"><span style="display:inline-block;width:12px;height:12px;border-radius:50%;background:#f39c12;vertical-align:-1px;margin-right:4px"></span>待审核</span></div>
<div class="td" style="left:1481.30px;width:60.70px"><div class="tog" style="left:15.4px;top:14px"></div></div>
<div class="abs" style="left:0;top:46px;width:1613px;height:1px;background:#f0f0f0"></div>
</div>
<div class="row" style="top:324px;background:#f8f8f9">
<div class="td" style="left:0.00px;width:44.60px"><span class="cb" style="margin-top:-4px"></span></div>
<div class="td" style="left:44.60px;width:46.80px">13</div>
<div class="td" style="left:91.40px;width:54.00px">370</div>
<div class="td" style="left:145.40px;width:90.90px">上海</div>
<div class="td" style="left:236.30px;width:61.20px"><svg class="abs" style="left:10.1px;top:2px" width="41" height="40" viewBox="-4 -4 41 40"><defs><filter id="bl6" x="-30%" y="-30%" width="160%" height="160%"><feGaussianBlur stdDeviation="2.2"/></filter></defs><g filter="url(#bl6)"><rect x="0" y="0" width="33" height="32" fill="#e9d6c6"/><ellipse cx="15" cy="12" rx="6" ry="4" fill="#c9786c"/><ellipse cx="21" cy="17" rx="3" ry="4" fill="#d8b0a8"/></g></svg></div>
<div class="td" style="left:297.50px;width:72.80px">肖技师</div>
<div class="td" style="left:370.30px;width:77.20px">肖程耀</div>
<div class="td" style="left:447.50px;width:48.90px">男</div>
<div class="td" style="left:496.40px;width:48.90px">24</div>
<div class="td" style="left:545.30px;width:116.90px">15899538590</div>
<div class="td" style="left:662.20px;width:63.20px"><div class="tog" style="left:16.6px;top:14px"></div></div>
<div class="td" style="left:725.40px;width:77.00px"><div class="tog" style="left:23.5px;top:14px"></div></div>
<div class="td" style="left:802.40px;width:63.20px">0</div>
<div class="td" style="left:865.60px;width:58.00px">0.00</div>
<div class="td" style="left:923.60px;width:63.20px">0.00</div>
<div class="td" style="left:986.80px;width:90.80px">0.00</div>
<div class="td" style="left:1077.60px;width:91.00px">0.00</div>
<div class="td" style="left:1168.60px;width:62.90px">0.00</div>
<div class="td" style="left:1231.50px;width:160.80px">2023-02-03 14:50:40</div>
<div class="td" style="left:1392.30px;width:89.00px"><span style="color:#f39c12"><span style="display:inline-block;width:12px;height:12px;border-radius:50%;background:#f39c12;vertical-align:-1px;margin-right:4px"></span>待审核</span></div>
<div class="td" style="left:1481.30px;width:60.70px"><div class="tog" style="left:15.4px;top:14px"></div></div>
<div class="abs" style="left:0;top:46px;width:1613px;height:1px;background:#f0f0f0"></div>
</div>
<div class="row" style="top:371px;background:#fff">
<div class="td" style="left:0.00px;width:44.60px"><span class="cb" style="margin-top:-4px"></span></div>
<div class="td" style="left:44.60px;width:46.80px">12</div>
<div class="td" style="left:91.40px;width:54.00px">381</div>
<div class="td" style="left:145.40px;width:90.90px">北京</div>
<div class="td" style="left:236.30px;width:61.20px"><svg class="abs" style="left:10.1px;top:2px" width="41" height="40" viewBox="-4 -4 41 40"><defs><filter id="bl7" x="-30%" y="-30%" width="160%" height="160%"><feGaussianBlur stdDeviation="2.2"/></filter></defs><g filter="url(#bl7)"><rect x="0" y="0" width="33" height="32" fill="#86685a"/><rect x="6" y="6" width="21" height="20" fill="#b29888"/><circle cx="17" cy="12" r="5" fill="#a0a2aa"/><ellipse cx="16" cy="24" rx="8" ry="6.5" fill="#cc6a5a"/><ellipse cx="16" cy="23.5" rx="5" ry="4" fill="#b8362a"/></g></svg></div>
<div class="td" style="left:297.50px;width:72.80px">付兰</div>
<div class="td" style="left:370.30px;width:77.20px">付梦瑶</div>
<div class="td" style="left:447.50px;width:48.90px"><span style="color:#18bc9c">女</span></div>
<div class="td" style="left:496.40px;width:48.90px">26</div>
<div class="td" style="left:545.30px;width:116.90px">13327456283</div>
<div class="td" style="left:662.20px;width:63.20px"><div class="tog" style="left:16.6px;top:14px"></div></div>
<div class="td" style="left:725.40px;width:77.00px"><div class="tog" style="left:23.5px;top:14px"></div></div>
<div class="td" style="left:802.40px;width:63.20px">0</div>
<div class="td" style="left:865.60px;width:58.00px">0.00</div>
<div class="td" style="left:923.60px;width:63.20px">0.00</div>
<div class="td" style="left:986.80px;width:90.80px">0.00</div>
<div class="td" style="left:1077.60px;width:91.00px">0.00</div>
<div class="td" style="left:1168.60px;width:62.90px">0.00</div>
<div class="td" style="left:1231.50px;width:160.80px">2023-02-02 18:34:29</div>
<div class="td" style="left:1392.30px;width:89.00px"><span style="color:#f39c12"><span style="display:inline-block;width:12px;height:12px;border-radius:50%;background:#f39c12;vertical-align:-1px;margin-right:4px"></span>待审核</span></div>
<div class="td" style="left:1481.30px;width:60.70px"><div class="tog" style="left:15.4px;top:14px"></div></div>
<div class="abs" style="left:0;top:46px;width:1613px;height:1px;background:#f0f0f0"></div>
</div>
<div class="row" style="top:418px;background:#f8f8f9">
<div class="td" style="left:0.00px;width:44.60px"><span class="cb" style="margin-top:-4px"></span></div>
<div class="td" style="left:44.60px;width:46.80px">11</div>
<div class="td" style="left:91.40px;width:54.00px">281</div>
<div class="td" style="left:145.40px;width:90.90px">上海</div>
<div class="td" style="left:236.30px;width:61.20px"><svg class="abs" style="left:10.1px;top:2px" width="41" height="40" viewBox="-4 -4 41 40"><defs><filter id="bl8" x="-30%" y="-30%" width="160%" height="160%"><feGaussianBlur stdDeviation="2.2"/></filter></defs><g filter="url(#bl8)"><rect x="0" y="0" width="33" height="32" fill="#e4ccbc"/><ellipse cx="19" cy="9" rx="9" ry="6" fill="#9a7868"/><circle cx="17" cy="16" r="7" fill="#d08c7c"/><rect x="0" y="24" width="33" height="8" fill="#303032"/><ellipse cx="17" cy="27" rx="7" ry="4" fill="#7a5048"/></g></svg></div>
<div class="td" style="left:297.50px;width:72.80px">付春雨</div>
<div class="td" style="left:370.30px;width:77.20px">付春雨</div>
<div class="td" style="left:447.50px;width:48.90px">男</div>
<div class="td" style="left:496.40px;width:48.90px">25</div>
<div class="td" style="left:545.30px;width:116.90px">13683127453</div>
<div class="td" style="left:662.20px;width:63.20px"><div class="tog" style="left:16.6px;top:14px"></div></div>
<div class="td" style="left:725.40px;width:77.00px"><div class="tog" style="left:23.5px;top:14px"></div></div>
<div class="td" style="left:802.40px;width:63.20px">0</div>
<div class="td" style="left:865.60px;width:58.00px">0.00</div>
<div class="td" style="left:923.60px;width:63.20px">0.00</div>
<div class="td" style="left:986.80px;width:90.80px">0.00</div>
<div class="td" style="left:1077.60px;width:91.00px">0.00</div>
<div class="td" style="left:1168.60px;width:62.90px">0.00</div>
<div class="td" style="left:1231.50px;width:160.80px">2023-01-29 19:13:46</div>
<div class="td" style="left:1392.30px;width:89.00px"><span style="color:#f39c12"><span style="display:inline-block;width:12px;height:12px;border-radius:50%;background:#f39c12;vertical-align:-1px;margin-right:4px"></span>待审核</span></div>
<div class="td" style="left:1481.30px;width:60.70px"><div class="tog" style="left:15.4px;top:14px"></div></div>
<div class="abs" style="left:0;top:46px;width:1613px;height:1px;background:#f0f0f0"></div>
</div>
<div class="row" style="top:465px;background:#fff">
<div class="td" style="left:0.00px;width:44.60px"><span class="cb" style="margin-top:-4px"></span></div>
<div class="td" style="left:44.60px;width:46.80px">10</div>
<div class="td" style="left:91.40px;width:54.00px"></div>
<div class="td" style="left:145.40px;width:90.90px"></div>
<div class="td" style="left:236.30px;width:61.20px"><svg class="abs" style="left:10.1px;top:2px" width="41" height="40" viewBox="-4 -4 41 40"><defs><filter id="bl9" x="-30%" y="-30%" width="160%" height="160%"><feGaussianBlur stdDeviation="2.2"/></filter></defs><g filter="url(#bl9)"><rect x="0" y="0" width="33" height="32" fill="#6a6a6a"/><ellipse cx="16.5" cy="4" rx="12" ry="6" fill="#3a3a3a"/></g></svg></div>
<div class="td" style="left:297.50px;width:72.80px"></div>
<div class="td" style="left:370.30px;width:77.20px"></div>
<div class="td" style="left:447.50px;width:48.90px"></div>
<div class="td" style="left:496.40px;width:48.90px"></div>
<div class="td" style="left:545.30px;width:116.90px"></div>
<div class="td" style="left:662.20px;width:63.20px"><div class="tog" style="left:16.6px;top:14px"></div></div>
<div class="td" style="left:725.40px;width:77.00px"><div class="tog" style="left:23.5px;top:14px"></div></div>
<div class="td" style="left:802.40px;width:63.20px">0</div>
<div class="td" style="left:865.60px;width:58.00px">0.00</div>
<div class="td" style="left:923.60px;width:63.20px">0.00</div>
<div class="td" style="left:986.80px;width:90.80px">0.00</div>
<div class="td" style="left:1077.60px;width:91.00px">0.00</div>
<div class="td" style="left:1168.60px;width:62.90px">0.00</div>
<div class="td" style="left:1231.50px;width:160.80px"></div>
<div class="td" style="left:1392.30px;width:89.00px"><span style="color:#f39c12"><span style="display:inline-block;width:12px;height:12px;border-radius:50%;background:#f39c12;vertical-align:-1px;margin-right:4px"></span>待审核</span></div>
<div class="td" style="left:1481.30px;width:60.70px"><div class="tog" style="left:15.4px;top:14px"></div></div>
<div class="abs" style="left:0;top:46px;width:1613px;height:1px;background:#f0f0f0"></div>
</div>
<div class="abs" style="left:0px;top:0;width:1px;height:480px;background:#f0f0f0"></div>
<div class="abs" style="left:44px;top:0;width:1px;height:480px;background:#f0f0f0"></div>
<div class="abs" style="left:91px;top:0;width:1px;height:480px;background:#f0f0f0"></div>
<div class="abs" style="left:145px;top:0;width:1px;height:480px;background:#f0f0f0"></div>
<div class="abs" style="left:236px;top:0;width:1px;height:480px;background:#f0f0f0"></div>
<div class="abs" style="left:297px;top:0;width:1px;height:480px;background:#f0f0f0"></div>
<div class="abs" style="left:370px;top:0;width:1px;height:480px;background:#f0f0f0"></div>
<div class="abs" style="left:447px;top:0;width:1px;height:480px;background:#f0f0f0"></div>
<div class="abs" style="left:496px;top:0;width:1px;height:480px;background:#f0f0f0"></div>
<div class="abs" style="left:545px;top:0;width:1px;height:480px;background:#f0f0f0"></div>
<div class="abs" style="left:662px;top:0;width:1px;height:480px;background:#f0f0f0"></div>
<div class="abs" style="left:725px;top:0;width:1px;height:480px;background:#f0f0f0"></div>
<div class="abs" style="left:802px;top:0;width:1px;height:480px;background:#f0f0f0"></div>
<div class="abs" style="left:865px;top:0;width:1px;height:480px;background:#f0f0f0"></div>
<div class="abs" style="left:923px;top:0;width:1px;height:480px;background:#f0f0f0"></div>
<div class="abs" style="left:986px;top:0;width:1px;height:480px;background:#f0f0f0"></div>
<div class="abs" style="left:1077px;top:0;width:1px;height:480px;background:#f0f0f0"></div>
<div class="abs" style="left:1168px;top:0;width:1px;height:480px;background:#f0f0f0"></div>
<div class="abs" style="left:1231px;top:0;width:1px;height:480px;background:#f0f0f0"></div>
<div class="abs" style="left:1392px;top:0;width:1px;height:480px;background:#f0f0f0"></div>
<div class="abs" style="left:1481px;top:0;width:1px;height:480px;background:#f0f0f0"></div>
<div class="abs" style="left:1501px;top:0;width:3px;height:480px;background:linear-gradient(to right, rgba(0,0,0,0), rgba(0,0,0,0.05))"></div>
<div class="abs" style="left:1504px;top:0;width:109px;height:480px;background:#fff">
<div class="th" style="left:0;width:109px">操作</div>
<div class="abs" style="left:0;top:0;width:109px;height:1px;background:#f0f0f0"></div>
<div class="abs" style="left:0;top:41px;width:109px;height:1px;background:#dedede"></div>
<div class="td" style="left:0;top:42px;width:109px;background:#f8f8f9"><div class="abs" style="left:16px;top:12px;width:51px;height:22px;border-radius:3px;background:#168ae8;color:#fff;font-size:12px;font-weight:bold;line-height:22px"><span class="abs" style="left:5px;top:4px;line-height:0"><svg width="13" height="13" viewBox="0 0 13 13"><path d="M0 5 L5 0 L8.8 3.6 L3.7 8.6 Z" fill="#fff"/><path d="M6.2 6.2 L7.8 4.6 L12.8 9.6 L11.2 11.2 Z" fill="#fff"/></svg></span><span class="abs" style="left:22px;top:0">审核</span></div><div class="abs" style="left:71px;top:12px;width:22px;height:22px;border-radius:3px;background:#18bc9c"><span class="abs" style="left:5px;top:5px;line-height:0"><svg width="12" height="12" viewBox="0 0 12 12"><path d="M0.3 11.7 L0.6 8.3 L8.3 0.6 L11.4 3.7 L3.7 11.4 Z" fill="#fff"/><path d="M7.2 1.7 L10.3 4.8" stroke="#18bc9c" stroke-width="0.7"/><path d="M1.2 8.6 L3.4 10.8" stroke="#18bc9c" stroke-width="0.6"/></svg></span></div></div>
<div class="abs" style="left:0;top:88px;width:109px;height:1px;background:#f0f0f0"></div>
<div class="td" style="left:0;top:89px;width:109px;background:#fff"><div class="abs" style="left:16px;top:12px;width:51px;height:22px;border-radius:3px;background:#168ae8;color:#fff;font-size:12px;font-weight:bold;line-height:22px"><span class="abs" style="left:5px;top:4px;line-height:0"><svg width="13" height="13" viewBox="0 0 13 13"><path d="M0 5 L5 0 L8.8 3.6 L3.7 8.6 Z" fill="#fff"/><path d="M6.2 6.2 L7.8 4.6 L12.8 9.6 L11.2 11.2 Z" fill="#fff"/></svg></span><span class="abs" style="left:22px;top:0">审核</span></div><div class="abs" style="left:71px;top:12px;width:22px;height:22px;border-radius:3px;background:#18bc9c"><span class="abs" style="left:5px;top:5px;line-height:0"><svg width="12" height="12" viewBox="0 0 12 12"><path d="M0.3 11.7 L0.6 8.3 L8.3 0.6 L11.4 3.7 L3.7 11.4 Z" fill="#fff"/><path d="M7.2 1.7 L10.3 4.8" stroke="#18bc9c" stroke-width="0.7"/><path d="M1.2 8.6 L3.4 10.8" stroke="#18bc9c" stroke-width="0.6"/></svg></span></div></div>
<div class="abs" style="left:0;top:135px;width:109px;height:1px;background:#f0f0f0"></div>
<div class="td" style="left:0;top:136px;width:109px;background:#f8f8f9"><div class="abs" style="left:16px;top:12px;width:51px;height:22px;border-radius:3px;background:#168ae8;color:#fff;font-size:12px;font-weight:bold;line-height:22px"><span class="abs" style="left:5px;top:4px;line-height:0"><svg width="13" height="13" viewBox="0 0 13 13"><path d="M0 5 L5 0 L8.8 3.6 L3.7 8.6 Z" fill="#fff"/><path d="M6.2 6.2 L7.8 4.6 L12.8 9.6 L11.2 11.2 Z" fill="#fff"/></svg></span><span class="abs" style="left:22px;top:0">审核</span></div><div class="abs" style="left:71px;top:12px;width:22px;height:22px;border-radius:3px;background:#18bc9c"><span class="abs" style="left:5px;top:5px;line-height:0"><svg width="12" height="12" viewBox="0 0 12 12"><path d="M0.3 11.7 L0.6 8.3 L8.3 0.6 L11.4 3.7 L3.7 11.4 Z" fill="#fff"/><path d="M7.2 1.7 L10.3 4.8" stroke="#18bc9c" stroke-width="0.7"/><path d="M1.2 8.6 L3.4 10.8" stroke="#18bc9c" stroke-width="0.6"/></svg></span></div></div>
<div class="abs" style="left:0;top:182px;width:109px;height:1px;background:#f0f0f0"></div>
<div class="td" style="left:0;top:183px;width:109px;background:#fff"><div class="abs" style="left:16px;top:12px;width:51px;height:22px;border-radius:3px;background:#168ae8;color:#fff;font-size:12px;font-weight:bold;line-height:22px"><span class="abs" style="left:5px;top:4px;line-height:0"><svg width="13" height="13" viewBox="0 0 13 13"><path d="M0 5 L5 0 L8.8 3.6 L3.7 8.6 Z" fill="#fff"/><path d="M6.2 6.2 L7.8 4.6 L12.8 9.6 L11.2 11.2 Z" fill="#fff"/></svg></span><span class="abs" style="left:22px;top:0">审核</span></div><div class="abs" style="left:71px;top:12px;width:22px;height:22px;border-radius:3px;background:#18bc9c"><span class="abs" style="left:5px;top:5px;line-height:0"><svg width="12" height="12" viewBox="0 0 12 12"><path d="M0.3 11.7 L0.6 8.3 L8.3 0.6 L11.4 3.7 L3.7 11.4 Z" fill="#fff"/><path d="M7.2 1.7 L10.3 4.8" stroke="#18bc9c" stroke-width="0.7"/><path d="M1.2 8.6 L3.4 10.8" stroke="#18bc9c" stroke-width="0.6"/></svg></span></div></div>
<div class="abs" style="left:0;top:229px;width:109px;height:1px;background:#f0f0f0"></div>
<div class="td" style="left:0;top:230px;width:109px;background:#f8f8f9"><div class="abs" style="left:16px;top:12px;width:51px;height:22px;border-radius:3px;background:#168ae8;color:#fff;font-size:12px;font-weight:bold;line-height:22px"><span class="abs" style="left:5px;top:4px;line-height:0"><svg width="13" height="13" viewBox="0 0 13 13"><path d="M0 5 L5 0 L8.8 3.6 L3.7 8.6 Z" fill="#fff"/><path d="M6.2 6.2 L7.8 4.6 L12.8 9.6 L11.2 11.2 Z" fill="#fff"/></svg></span><span class="abs" style="left:22px;top:0">审核</span></div><div class="abs" style="left:71px;top:12px;width:22px;height:22px;border-radius:3px;background:#18bc9c"><span class="abs" style="left:5px;top:5px;line-height:0"><svg width="12" height="12" viewBox="0 0 12 12"><path d="M0.3 11.7 L0.6 8.3 L8.3 0.6 L11.4 3.7 L3.7 11.4 Z" fill="#fff"/><path d="M7.2 1.7 L10.3 4.8" stroke="#18bc9c" stroke-width="0.7"/><path d="M1.2 8.6 L3.4 10.8" stroke="#18bc9c" stroke-width="0.6"/></svg></span></div></div>
<div class="abs" style="left:0;top:276px;width:109px;height:1px;background:#f0f0f0"></div>
<div class="td" style="left:0;top:277px;width:109px;background:#fff"><div class="abs" style="left:16px;top:12px;width:51px;height:22px;border-radius:3px;background:#168ae8;color:#fff;font-size:12px;font-weight:bold;line-height:22px"><span class="abs" style="left:5px;top:4px;line-height:0"><svg width="13" height="13" viewBox="0 0 13 13"><path d="M0 5 L5 0 L8.8 3.6 L3.7 8.6 Z" fill="#fff"/><path d="M6.2 6.2 L7.8 4.6 L12.8 9.6 L11.2 11.2 Z" fill="#fff"/></svg></span><span class="abs" style="left:22px;top:0">审核</span></div><div class="abs" style="left:71px;top:12px;width:22px;height:22px;border-radius:3px;background:#18bc9c"><span class="abs" style="left:5px;top:5px;line-height:0"><svg width="12" height="12" viewBox="0 0 12 12"><path d="M0.3 11.7 L0.6 8.3 L8.3 0.6 L11.4 3.7 L3.7 11.4 Z" fill="#fff"/><path d="M7.2 1.7 L10.3 4.8" stroke="#18bc9c" stroke-width="0.7"/><path d="M1.2 8.6 L3.4 10.8" stroke="#18bc9c" stroke-width="0.6"/></svg></span></div></div>
<div class="abs" style="left:0;top:323px;width:109px;height:1px;background:#f0f0f0"></div>
<div class="td" style="left:0;top:324px;width:109px;background:#f8f8f9"><div class="abs" style="left:16px;top:12px;width:51px;height:22px;border-radius:3px;background:#168ae8;color:#fff;font-size:12px;font-weight:bold;line-height:22px"><span class="abs" style="left:5px;top:4px;line-height:0"><svg width="13" height="13" viewBox="0 0 13 13"><path d="M0 5 L5 0 L8.8 3.6 L3.7 8.6 Z" fill="#fff"/><path d="M6.2 6.2 L7.8 4.6 L12.8 9.6 L11.2 11.2 Z" fill="#fff"/></svg></span><span class="abs" style="left:22px;top:0">审核</span></div><div class="abs" style="left:71px;top:12px;width:22px;height:22px;border-radius:3px;background:#18bc9c"><span class="abs" style="left:5px;top:5px;line-height:0"><svg width="12" height="12" viewBox="0 0 12 12"><path d="M0.3 11.7 L0.6 8.3 L8.3 0.6 L11.4 3.7 L3.7 11.4 Z" fill="#fff"/><path d="M7.2 1.7 L10.3 4.8" stroke="#18bc9c" stroke-width="0.7"/><path d="M1.2 8.6 L3.4 10.8" stroke="#18bc9c" stroke-width="0.6"/></svg></span></div></div>
<div class="abs" style="left:0;top:370px;width:109px;height:1px;background:#f0f0f0"></div>
<div class="td" style="left:0;top:371px;width:109px;background:#fff"><div class="abs" style="left:16px;top:12px;width:51px;height:22px;border-radius:3px;background:#168ae8;color:#fff;font-size:12px;font-weight:bold;line-height:22px"><span class="abs" style="left:5px;top:4px;line-height:0"><svg width="13" height="13" viewBox="0 0 13 13"><path d="M0 5 L5 0 L8.8 3.6 L3.7 8.6 Z" fill="#fff"/><path d="M6.2 6.2 L7.8 4.6 L12.8 9.6 L11.2 11.2 Z" fill="#fff"/></svg></span><span class="abs" style="left:22px;top:0">审核</span></div><div class="abs" style="left:71px;top:12px;width:22px;height:22px;border-radius:3px;background:#18bc9c"><span class="abs" style="left:5px;top:5px;line-height:0"><svg width="12" height="12" viewBox="0 0 12 12"><path d="M0.3 11.7 L0.6 8.3 L8.3 0.6 L11.4 3.7 L3.7 11.4 Z" fill="#fff"/><path d="M7.2 1.7 L10.3 4.8" stroke="#18bc9c" stroke-width="0.7"/><path d="M1.2 8.6 L3.4 10.8" stroke="#18bc9c" stroke-width="0.6"/></svg></span></div></div>
<div class="abs" style="left:0;top:417px;width:109px;height:1px;background:#f0f0f0"></div>
<div class="td" style="left:0;top:418px;width:109px;background:#f8f8f9"><div class="abs" style="left:16px;top:12px;width:51px;height:22px;border-radius:3px;background:#168ae8;color:#fff;font-size:12px;font-weight:bold;line-height:22px"><span class="abs" style="left:5px;top:4px;line-height:0"><svg width="13" height="13" viewBox="0 0 13 13"><path d="M0 5 L5 0 L8.8 3.6 L3.7 8.6 Z" fill="#fff"/><path d="M6.2 6.2 L7.8 4.6 L12.8 9.6 L11.2 11.2 Z" fill="#fff"/></svg></span><span class="abs" style="left:22px;top:0">审核</span></div><div class="abs" style="left:71px;top:12px;width:22px;height:22px;border-radius:3px;background:#18bc9c"><span class="abs" style="left:5px;top:5px;line-height:0"><svg width="12" height="12" viewBox="0 0 12 12"><path d="M0.3 11.7 L0.6 8.3 L8.3 0.6 L11.4 3.7 L3.7 11.4 Z" fill="#fff"/><path d="M7.2 1.7 L10.3 4.8" stroke="#18bc9c" stroke-width="0.7"/><path d="M1.2 8.6 L3.4 10.8" stroke="#18bc9c" stroke-width="0.6"/></svg></span></div></div>
<div class="abs" style="left:0;top:464px;width:109px;height:1px;background:#f0f0f0"></div>
<div class="td" style="left:0;top:465px;width:109px;background:#fff"><div class="abs" style="left:16px;top:12px;width:51px;height:22px;border-radius:3px;background:#168ae8;color:#fff;font-size:12px;font-weight:bold;line-height:22px"><span class="abs" style="left:5px;top:4px;line-height:0"><svg width="13" height="13" viewBox="0 0 13 13"><path d="M0 5 L5 0 L8.8 3.6 L3.7 8.6 Z" fill="#fff"/><path d="M6.2 6.2 L7.8 4.6 L12.8 9.6 L11.2 11.2 Z" fill="#fff"/></svg></span><span class="abs" style="left:22px;top:0">审核</span></div><div class="abs" style="left:71px;top:12px;width:22px;height:22px;border-radius:3px;background:#18bc9c"><span class="abs" style="left:5px;top:5px;line-height:0"><svg width="12" height="12" viewBox="0 0 12 12"><path d="M0.3 11.7 L0.6 8.3 L8.3 0.6 L11.4 3.7 L3.7 11.4 Z" fill="#fff"/><path d="M7.2 1.7 L10.3 4.8" stroke="#18bc9c" stroke-width="0.7"/><path d="M1.2 8.6 L3.4 10.8" stroke="#18bc9c" stroke-width="0.6"/></svg></span></div></div>
<div class="abs" style="left:0;top:511px;width:109px;height:1px;background:#f0f0f0"></div>
<div class="abs" style="left:0;top:0;width:1px;height:480px;background:#f0f0f0"></div>
<div class="abs" style="left:108px;top:0;width:1px;height:480px;background:#f0f0f0"></div>
</div>
</div>
</body></html>
